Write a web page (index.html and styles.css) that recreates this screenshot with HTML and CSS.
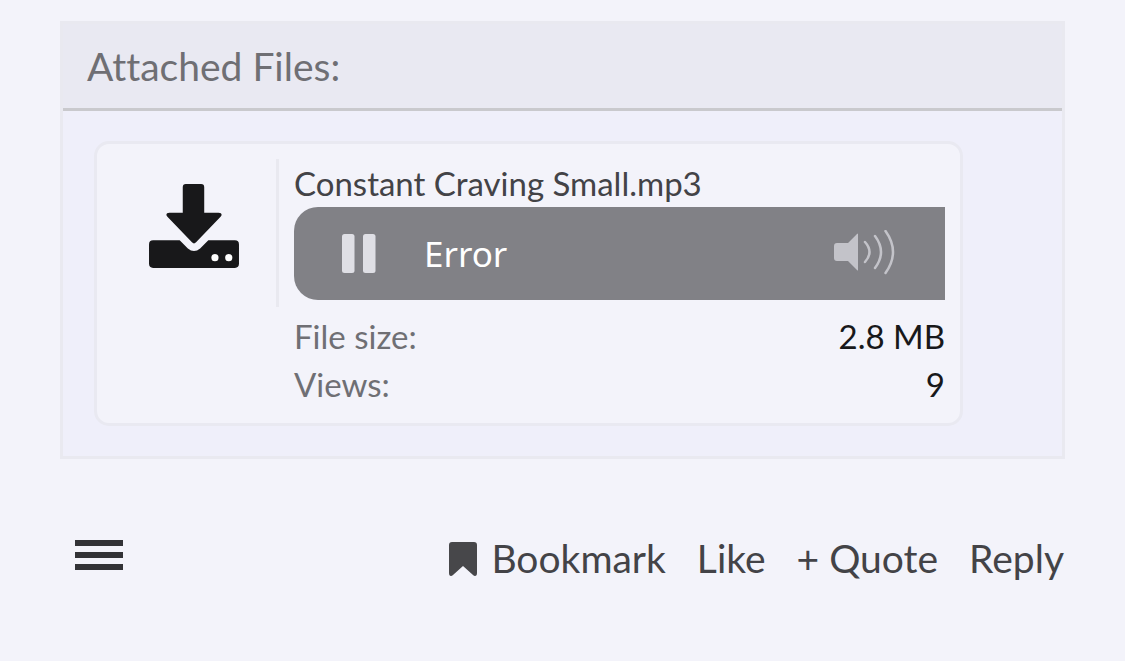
FILE: index.html
```
<!DOCTYPE html>
<html lang="en">
<head>
<meta charset="utf-8">
<meta name="viewport" content="width=device-width, initial-scale=1">
<title>Attached Files</title>
<link rel="stylesheet" href="styles.css">
</head>
<body>
<main class="post">
  <section class="attachments">
    <h2 class="attachments-title">Attached Files:</h2>
    <div class="attachments-body">
      <article class="file">
        <div class="file-thumb">
          <svg class="download-icon" viewBox="0 0 90 84" aria-hidden="true">
            <path d="M37 1h15q3 0 3 3v25h14q3 0 3 2 0 1-1 2L47 58q-2 2-4 0L19 33q-1-1-1-2 0-2 3-2h13V4q0-3 3-3z"/>
            <path d="M5 56h26l8 8q6 5 12 0l8-8h26q4 0 4 4v19q0 4-4 4H5q-4 0-4-4V60q0-4 4-4z"/>
            <circle class="drive-light" cx="65.500" cy="73" r="3.500"/>
            <circle class="drive-light" cx="79" cy="73" r="3.500"/>
          </svg>
        </div>
        <div class="file-info">
          <a class="file-name" href="#">Constant Craving Small.mp3</a>
          <div class="player">
            <button class="player-button" type="button" aria-label="Pause">
              <svg class="pause-icon" viewBox="0 0 34 40" aria-hidden="true">
                <rect x="0" y="0" width="12.500" height="39" rx="2.500"/>
                <rect x="21" y="0" width="12.500" height="39" rx="2.500"/>
              </svg>
            </button>
            <span class="player-status">Error</span>
            <button class="player-button" type="button" aria-label="Mute">
              <svg class="volume-icon" viewBox="0 0 62 48" aria-hidden="true">
                <path class="speaker" d="M3 13h11l9-9q1-1 1 0v36q0 1-1 0l-9-9H3q-3 0-3-3V16q0-3 3-3z"/>
                <path class="wave" d="M31 12q9 10 0 20M41 6q12 16 0 32M51.500 1q15 21 0 42"/>
              </svg>
            </button>
          </div>
          <dl class="file-stats">
            <div class="stat"><dt>File size:</dt><dd>2.8 MB</dd></div>
            <div class="stat"><dt>Views:</dt><dd>9</dd></div>
          </dl>
        </div>
      </article>
    </div>
  </section>
  <footer class="post-footer">
    <button class="menu-button" type="button" aria-label="Menu">
      <svg class="menu-icon" viewBox="0 0 48 30" aria-hidden="true"><path d="M0 0h48v6H0zM0 12h48v6H0zM0 24h48v6H0z"/></svg>
    </button>
    <nav class="actions">
      <a class="action bookmark" href="#">
        <svg class="bookmark-icon" viewBox="0 0 28 34" aria-hidden="true"><path d="M3 0h22q3 0 3 3v28q0 3-2 3-1 0-2-1L14 24 4 33q-1 1-2 1-2 0-2-3V3q0-3 3-3z"/></svg>
        <span>Bookmark</span>
      </a>
      <a class="action" href="#">Like</a>
      <a class="action" href="#">+ Quote</a>
      <a class="action" href="#">Reply</a>
    </nav>
  </footer>
</main>
</body>
</html>
```
FILE: styles.css
```
* { box-sizing: border-box; }
body {
  margin: 0;
  background: #f3f3fa;
  color: #434347;
  font-family: Lato, sans-serif;
  font-variant-ligatures: none;
}
a { color: inherit; text-decoration: none; }
button { padding: 0; border: 0; background: none; }
svg { display: block; }

.post { padding: 21px 60px 72px; }

.attachments { border: 3px solid #e9e9f0; background: #efeffa; }
.attachments-title {
  margin: 0;
  padding: 18px 24px;
  border-bottom: 3px solid #c9c9cd;
  background: #e9e9f2;
  color: #6f6f74;
  font-size: 39px;
  font-weight: 400;
  line-height: 48px;
}
.attachments-body { padding: 30px 99px 30px 31px; }

.file {
  display: flex;
  align-items: flex-start;
  gap: 15px;
  padding: 15px;
  border: 3px solid #e9e9f1;
  border-radius: 15px;
  background: #f3f3fa;
}
.file-thumb {
  display: flex;
  justify-content: center;
  width: 167px;
  height: 148px;
  padding-top: 24px;
  border-right: 3px solid #e9e9f0;
}
.download-icon { width: 92px; height: 86px; fill: #18181a; }
.drive-light { fill: #fff; }

.file-info { flex: 1; min-width: 0; font-size: 33px; line-height: 48px; }
.file-name { display: block; }
.player {
  display: flex;
  align-items: center;
  height: 93px;
  padding: 0 49px 0 48px;
  border-radius: 24px 0 0 24px;
  background: #818186;
}
.player-status {
  flex: 1;
  margin-left: 48px;
  color: #fff;
  font-family: "Noto Sans", sans-serif;
  font-size: 35px;
}
.pause-icon { width: 34px; height: 40px; fill: #dfdfe5; }
.volume-icon { width: 62px; height: 48px; }
.speaker { fill: #c3c3c9; }
.wave { fill: none; stroke: #c3c3c9; stroke-width: 2.500; stroke-linecap: round; }

.file-stats { margin: 12px 0 0; }
.stat { display: flex; justify-content: space-between; }
.stat dt { color: #6f6f74; }
.stat dd { margin: 0; color: #18181a; }

.post-footer {
  display: flex;
  align-items: center;
  justify-content: space-between;
  padding: 63px 1px 0 15px;
}
.menu-icon { width: 48px; height: 30px; fill: #323236; }
.actions { display: flex; gap: 31px; padding-top: 8px; font-size: 39px; line-height: 57px; }
.bookmark { display: flex; align-items: center; gap: 14px; }
.bookmark-icon { width: 28px; height: 34px; fill: #47474a; }
```
